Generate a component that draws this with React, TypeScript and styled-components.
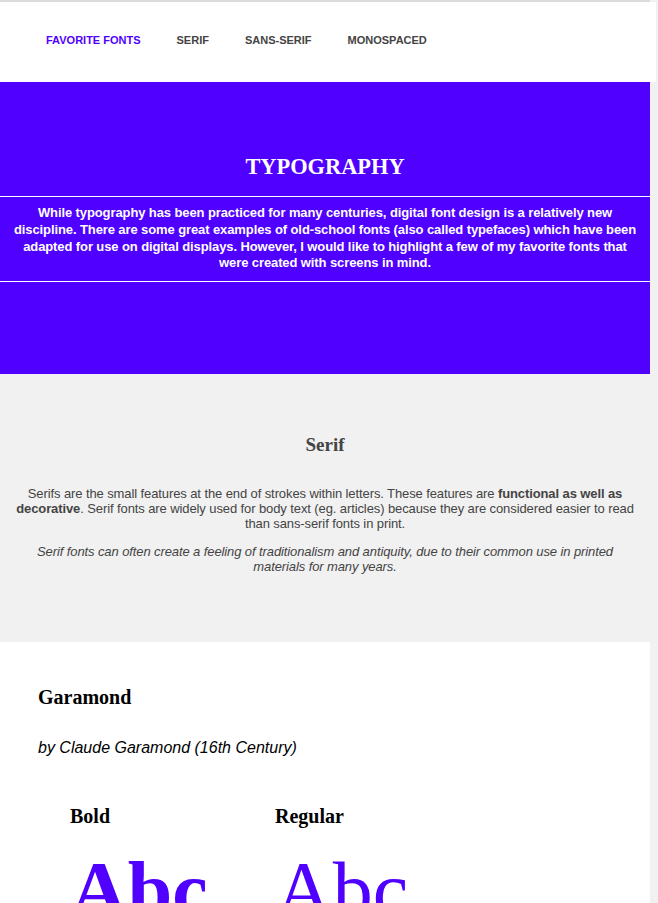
import React from "react";
import styled, { createGlobalStyle } from "styled-components";

const Global = createGlobalStyle`
  html, body { margin: 0; padding: 0; }
  body {
    background: #f1f1f1;
    font-family: "Liberation Sans", Arial, sans-serif;
    overflow: hidden;
  }
`;

const PURPLE = "#5000ff";

const Page = styled.div`
  width: 650px;
  border-top: 2px solid #dcdcdc;
`;

const Nav = styled.nav`
  width: 656px;
  height: 80px;
  background: #ffffff;
  display: flex;
  align-items: center;
  padding-left: 46px;
  gap: 36px;
  box-sizing: border-box;
  padding-bottom: 4px;
`;

const NavLink = styled.a<{ $active?: boolean }>`
  font-family: "Liberation Sans", Arial, sans-serif;
  font-size: 11px;
  font-weight: bold;
  text-transform: uppercase;
  text-decoration: none;
  color: ${(p) => (p.$active ? PURPLE : "#444444")};
`;

const Hero = styled.header`
  background: ${PURPLE};
  height: 292px;
  box-sizing: border-box;
  padding-top: 72px;
  color: #ffffff;
  text-align: center;
`;

const HeroTitle = styled.h1`
  font-family: "Liberation Serif", "Times New Roman", serif;
  font-size: 22.4px;
  font-weight: bold;
  line-height: 26px;
  margin: 0 0 16px;
`;

const Rule = styled.hr`
  border: none;
  height: 1px;
  background: #ffffff;
  margin: 0;
`;

const HeroText = styled.p`
  font-size: 13px;
  font-weight: bold;
  letter-spacing: -0.1px;
  line-height: 16.8px;
  margin: 0;
  padding: 8px 12px 9px;
`;

const Intro = styled.section`
  height: 268px;
  box-sizing: border-box;
  padding: 60px 14px 0;
  text-align: center;
  color: #444444;
`;

const IntroTitle = styled.h2`
  font-family: "Liberation Serif", "Times New Roman", serif;
  font-size: 19px;
  font-weight: bold;
  line-height: 22px;
  margin: 0 0 30px;
`;

const IntroText = styled.p<{ $italic?: boolean }>`
  font-size: 13px;
  letter-spacing: -0.1px;
  line-height: 15px;
  margin: 0 0 13px;
  font-style: ${(p) => (p.$italic ? "italic" : "normal")};
`;

const Card = styled.section`
  background: #ffffff;
  padding: 44px 0 0 38px;
  height: 300px;
  box-sizing: border-box;
`;

const FontName = styled.h3`
  font-family: "Liberation Serif", "Times New Roman", serif;
  font-size: 20px;
  font-weight: bold;
  line-height: 22px;
  margin: 0 0 30px;
  color: #000;
`;

const Author = styled.p`
  font-size: 16px;
  font-style: italic;
  line-height: 20px;
  margin: 0 0 47px;
  color: #000;
`;

const Samples = styled.div`
  display: flex;
  padding-left: 32px;
`;

const Sample = styled.div`
  width: 205px;
`;

const SampleLabel = styled.h4`
  font-family: "Liberation Serif", "Times New Roman", serif;
  font-size: 20px;
  font-weight: bold;
  line-height: 22px;
  margin: 0 0 17px;
  color: #000;
`;

const Glyphs = styled.div<{ $bold?: boolean }>`
  font-family: "Liberation Serif", "Times New Roman", serif;
  font-size: 80px;
  line-height: 92px;
  color: ${PURPLE};
  font-weight: ${(p) => (p.$bold ? "bold" : "normal")};
`;

export default function App() {
  return (
    <>
      <Global />
      <Page>
        <Nav>
          <NavLink $active>Favorite Fonts</NavLink>
          <NavLink>Serif</NavLink>
          <NavLink>Sans-Serif</NavLink>
          <NavLink>Monospaced</NavLink>
        </Nav>
        <Hero>
          <HeroTitle>TYPOGRAPHY</HeroTitle>
          <Rule />
          <HeroText>
            While typography has been practiced for many centuries, digital font design is a relatively new
            discipline. There are some great examples of old-school fonts (also called typefaces) which have been
            adapted for use on digital displays. However, I would like to highlight a few of my favorite fonts that
            were created with screens in mind.
          </HeroText>
          <Rule />
        </Hero>
        <Intro>
          <IntroTitle>Serif</IntroTitle>
          <IntroText>
            Serifs are the small features at the end of strokes within letters. These features are{" "}
            <strong>functional as well as decorative</strong>. Serif fonts are widely used for body text (eg. articles)
            because they are considered easier to read than sans-serif fonts in print.
          </IntroText>
          <IntroText $italic>
            Serif fonts can often create a feeling of traditionalism and antiquity, due to their common use in printed
            materials for many years.
          </IntroText>
        </Intro>
        <Card>
          <FontName>Garamond</FontName>
          <Author>by Claude Garamond (16th Century)</Author>
          <Samples>
            <Sample>
              <SampleLabel>Bold</SampleLabel>
              <Glyphs $bold>Abc</Glyphs>
            </Sample>
            <Sample>
              <SampleLabel>Regular</SampleLabel>
              <Glyphs>Abc</Glyphs>
            </Sample>
          </Samples>
        </Card>
      </Page>
    </>
  );
}
